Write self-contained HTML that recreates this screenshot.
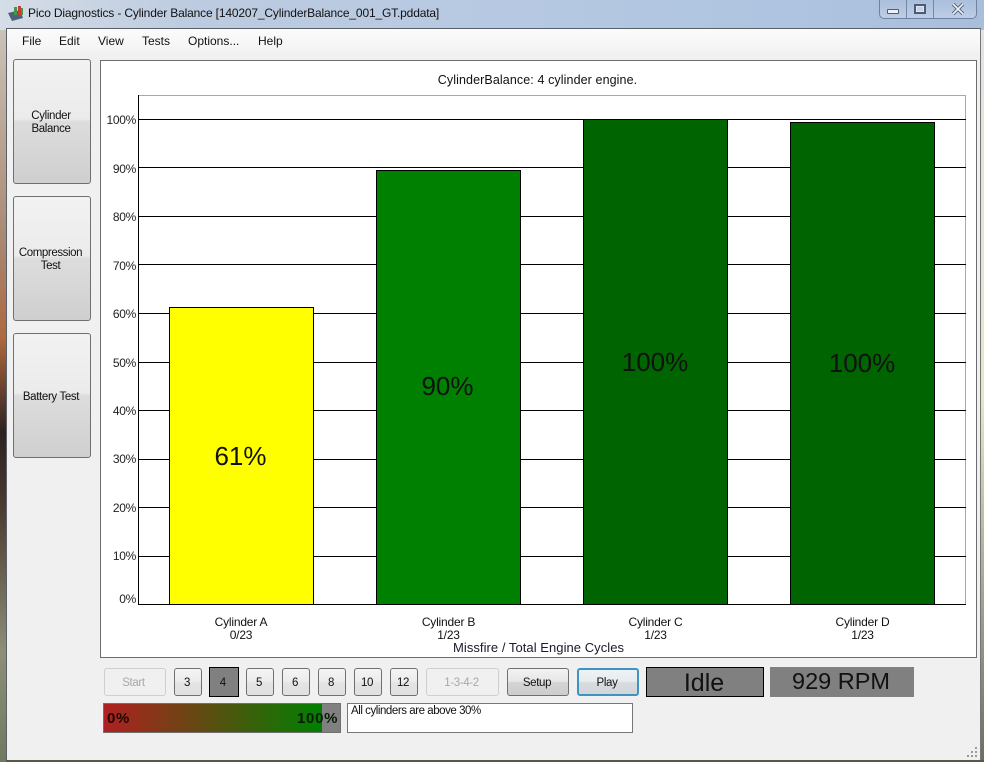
<!DOCTYPE html>
<html><head><meta charset="utf-8"><style>
html,body{margin:0;padding:0}
body{width:984px;height:762px;position:relative;overflow:hidden;background:#ccd3d6;font-family:"Liberation Sans",sans-serif;font-size:12px;color:#111}
.a{position:absolute;box-sizing:border-box}
.t{position:absolute;white-space:nowrap;line-height:13px}
.c{text-align:center;transform:translateX(-50%)}
.btn{position:absolute;box-sizing:border-box;border:1px solid #707070;border-radius:3px;background:linear-gradient(#f2f2f2 0%,#ebebeb 48%,#dddddd 50%,#cfcfcf 100%);text-align:center;font-size:11.5px;letter-spacing:-.35px}
.sm{height:28px;width:28px;top:668px;line-height:28px;background:linear-gradient(#f4f4f4 0%,#ececec 48%,#e4e4e4 52%,#e0e0e0 100%)}
.dis{border-color:#cfcfcf;color:#a8a8a8;background:#f0f0f0}
.g{position:absolute;left:138px;width:828px;height:1px;background:#000}
.y{position:absolute;right:848px;text-align:right;line-height:13px;letter-spacing:-.3px;color:#222}
.bar{position:absolute;box-sizing:border-box;border:1px solid #000;width:145px}
.v{position:absolute;width:145px;text-align:center;font-size:26px;line-height:32px;color:#111}
</style></head><body>
<div class="a" style="left:0;top:0;width:984px;height:30px;background:linear-gradient(90deg,#d5dde6 0%,#bccbe0 20%,#b7c9e2 50%,#aec4e0 80%,#a8bedb 100%)"></div>
<div class="a" style="left:0;top:30px;width:6px;height:732px;background:linear-gradient(#c9c3b8 0%,#a8856e 30%,#b0683f 42%,#2c2320 55%,#4a3a30 65%,#8d8f78 85%,#6f7a60 100%)"></div>
<div class="a" style="left:981px;top:30px;width:3px;height:732px;background:linear-gradient(#dfe5e0,#e8e6c8 50%,#6b6f5c)"></div>
<div class="a" style="left:6px;top:760px;width:978px;height:2px;background:#55584a"></div>
<svg class="a" style="left:7px;top:5px" width="18" height="18" viewBox="0 0 18 18"><path d="M1 8 L13 5 L16 13 L5 16 Z" fill="#4f6178"/><rect x="7" y="2" width="3" height="8" fill="#3d9a4a"/><rect x="11" y="1" width="3" height="9" fill="#c93a34"/><rect x="14" y="3" width="2" height="7" fill="#3d9a4a"/></svg>
<div class="t" style="left:28px;top:7px;font-size:12px;letter-spacing:-.16px;color:#111">Pico Diagnostics - Cylinder Balance [140207_CylinderBalance_001_GT.pddata]</div>
<div class="a" style="left:879px;top:-1px;width:98px;height:20px;border:1px solid #6f82a0;border-top:0;border-radius:0 0 5px 5px;background:linear-gradient(#a9bedb,#bccde4)"></div>
<div class="a" style="left:906px;top:0;width:1px;height:18px;background:#7488a6"></div>
<div class="a" style="left:933px;top:0;width:1px;height:18px;background:#7488a6"></div>
<div class="a" style="left:887px;top:9px;width:12px;height:5px;background:#eef2f8;border:1px solid #4d5c74;border-radius:1px"></div>
<div class="a" style="left:914px;top:4px;width:12px;height:10px;border:2px solid #4d5c74;background:#c5d3e6;outline:1px solid #dfe7f2;outline-offset:-3px"></div>
<svg class="a" style="left:951px;top:3px" width="14" height="12" viewBox="0 0 14 12"><path d="M2 1 L12 11 M12 1 L2 11" stroke="#4d5c74" stroke-width="3.4"/><path d="M2 1 L12 11 M12 1 L2 11" stroke="#eef2f8" stroke-width="1.6"/></svg>

<div class="a" style="left:6px;top:28px;width:975px;height:732px;background:#f0f0f0;border:1px solid #5a6068;border-right-color:#777;border-bottom:0"></div>
<div class="a" style="left:7px;top:29px;width:973px;height:24px;background:linear-gradient(#fbfbfb,#f6f6f6 70%,#f1f1f1)"></div>
<div class="t" style="left:22px;top:35px">File</div>
<div class="t" style="left:59px;top:35px">Edit</div>
<div class="t" style="left:98px;top:35px">View</div>
<div class="t" style="left:142px;top:35px">Tests</div>
<div class="t" style="left:188px;top:35px">Options...</div>
<div class="t" style="left:258px;top:35px">Help</div>

<div class="btn" style="left:13px;top:59px;width:78px;height:125px;padding-top:50px;padding-right:2px;line-height:13px">Cylinder<br>Balance</div>
<div class="btn" style="left:13px;top:196px;width:78px;height:125px;padding-top:50px;padding-right:3px;line-height:13px;letter-spacing:-.4px">Compression<br>Test</div>
<div class="btn" style="left:13px;top:333px;width:78px;height:125px;padding-top:57px;padding-right:2px;line-height:13px">Battery Test</div>

<div class="a" style="left:100px;top:60px;width:877px;height:598px;background:#fff;border:1px solid #6d6d6d"></div>
<div class="t c" style="left:537.5px;top:74px;font-size:12.5px;letter-spacing:.1px">CylinderBalance: 4 cylinder engine.</div>
<div class="a" style="left:138px;top:95px;width:828px;height:1px;background:#a8a8a8"></div>
<div class="a" style="left:965px;top:95px;width:1px;height:510px;background:#a8a8a8"></div>
<div class="g" style="top:119px"></div><div class="g" style="top:167px"></div><div class="g" style="top:216px"></div><div class="g" style="top:264px"></div><div class="g" style="top:313px"></div><div class="g" style="top:362px"></div><div class="g" style="top:410px"></div><div class="g" style="top:459px"></div><div class="g" style="top:507px"></div><div class="g" style="top:556px"></div><div class="g" style="top:604px"></div>
<div class="a" style="left:138px;top:95px;width:1px;height:510px;background:#000"></div>
<div class="y" style="top:114px">100%</div><div class="y" style="top:163px">90%</div><div class="y" style="top:211px">80%</div><div class="y" style="top:260px">70%</div><div class="y" style="top:308px">60%</div><div class="y" style="top:357px">50%</div><div class="y" style="top:405px">40%</div><div class="y" style="top:453px">30%</div><div class="y" style="top:502px">20%</div><div class="y" style="top:550px">10%</div><div class="y" style="top:593px">0%</div>

<div class="bar" style="left:169px;top:307px;height:298px;background:#ffff00"></div>
<div class="bar" style="left:376px;top:170px;height:435px;background:#008000"></div>
<div class="bar" style="left:583px;top:119px;height:486px;background:#006400"></div>
<div class="bar" style="left:790px;top:122px;height:483px;background:#006400"></div>
<div class="v" style="left:168px;top:440px">61%</div>
<div class="v" style="left:375px;top:370px">90%</div>
<div class="v" style="left:582.5px;top:346px">100%</div>
<div class="v" style="left:789.5px;top:347px">100%</div>

<div class="t c" style="left:241px;top:616px;letter-spacing:-.2px">Cylinder A<br>0/23</div>
<div class="t c" style="left:448.5px;top:616px;letter-spacing:-.2px">Cylinder B<br>1/23</div>
<div class="t c" style="left:655.5px;top:616px;letter-spacing:-.2px">Cylinder C<br>1/23</div>
<div class="t c" style="left:862.5px;top:616px;letter-spacing:-.2px">Cylinder D<br>1/23</div>
<div class="a" style="left:400px;top:640px;width:280px;height:15px;overflow:hidden"><div class="t" style="left:53px;top:1px;font-size:13px;line-height:14px;letter-spacing:.05px;color:#1a1a2a">Missfire / Total Engine Cycles</div></div>

<div class="btn sm dis" style="left:104px;width:62px;padding-right:3px">Start</div>
<div class="btn sm" style="left:174px;padding-right:2px">3</div>
<div class="a" style="left:209px;top:667px;width:30px;height:30px;background:#808080;border:1px solid #000;text-align:center;line-height:30px;padding-right:2px;font-size:11.5px">4</div>
<div class="btn sm" style="left:246px;padding-right:2px">5</div>
<div class="btn sm" style="left:282px;padding-right:2px">6</div>
<div class="btn sm" style="left:318px;padding-right:2px">8</div>
<div class="btn sm" style="left:354px;padding-right:2px">10</div>
<div class="btn sm" style="left:390px;padding-right:2px">12</div>
<div class="btn sm dis" style="left:426px;width:73px;padding-right:2px">1-3-4-2</div>
<div class="btn sm" style="left:507px;width:62px;padding-right:2px;background:linear-gradient(#f3f3f3,#e6e6e6 48%,#d4d4d4 52%,#cdcdcd)">Setup</div>
<div class="btn sm" style="left:577px;width:62px;padding-right:2px;border:2px solid #3f94c4;line-height:26px;background:linear-gradient(#eef3f6,#e6ebee 48%,#d8dcdf 52%,#d2d6d9)">Play</div>
<div class="a" style="left:646px;top:667px;width:118px;height:30px;background:#808080;border:1px solid #000;padding-right:2px;text-align:center;font-size:25px;line-height:30px">Idle</div>
<div class="a" style="left:770px;top:667px;width:144px;height:30px;background:#808080;padding-right:2px;text-align:center;font-size:23.5px;line-height:29px">929 RPM</div>

<div class="a" style="left:103px;top:703px;width:238px;height:30px;background:#808080;border:1px solid #707070"></div>
<div class="a" style="left:104px;top:704px;width:218px;height:28px;background:linear-gradient(90deg,#b02020,#008000)"></div>
<div class="t" style="left:107px;top:711px;font-size:15px;font-weight:bold;line-height:15px;letter-spacing:.7px;color:#1c0606">0%</div>
<div class="t" style="left:297px;top:711px;font-size:15px;font-weight:bold;line-height:15px;letter-spacing:.7px;color:#061c06">100%</div>
<div class="a" style="left:347px;top:703px;width:286px;height:30px;background:#fff;border:1px solid #777"></div>
<div class="t" style="left:351px;top:705px;font-size:11.5px;letter-spacing:-.45px">All cylinders are above 30%</div>

<svg class="a" style="left:966px;top:746px" width="12" height="12" viewBox="0 0 12 12" fill="#9a9a9a"><rect x="9" y="1" width="2" height="2"/><rect x="5" y="5" width="2" height="2"/><rect x="9" y="5" width="2" height="2"/><rect x="1" y="9" width="2" height="2"/><rect x="5" y="9" width="2" height="2"/><rect x="9" y="9" width="2" height="2"/></svg>
</body></html>
